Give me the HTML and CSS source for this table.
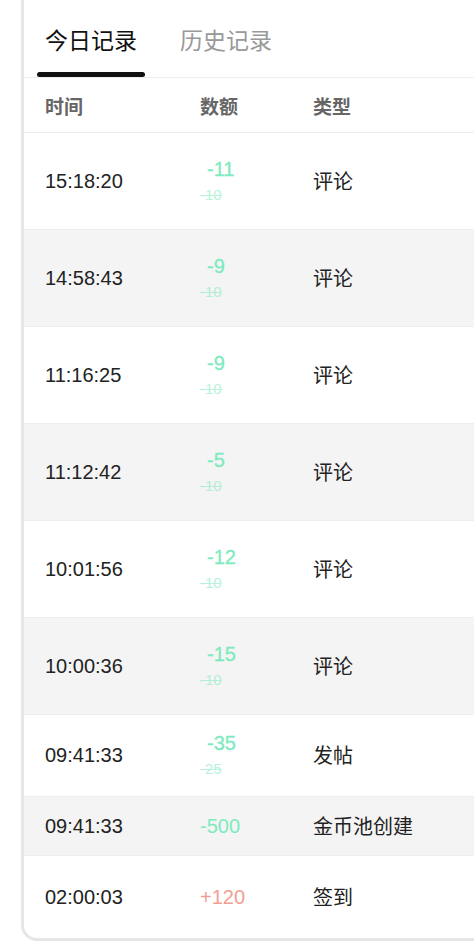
FILE: index.html
```html
<!DOCTYPE html>
<html lang="zh-CN">
<head>
  <meta charset="UTF-8" />
  <meta name="viewport" content="width=device-width, initial-scale=1" />
  <title>金币记录</title>
  <link rel="stylesheet" href="styles.css">
</head>
<body>
  <div class="card">
    <div class="tabs">
      <div class="tab active">今日记录</div>
      <div class="tab">历史记录</div>
    </div>

    <div class="row head">
      <span>时间</span>
      <span>数额</span>
      <span>类型</span>
    </div>

    <div class="row tall">
      <span class="time">15:18:20</span>
      <span class="amount stacked"><b>-11</b><s>-10</s></span>
      <span class="type">评论</span>
    </div>
    <div class="row tall alt">
      <span class="time">14:58:43</span>
      <span class="amount stacked"><b>-9</b><s>-10</s></span>
      <span class="type">评论</span>
    </div>
    <div class="row tall">
      <span class="time">11:16:25</span>
      <span class="amount stacked"><b>-9</b><s>-10</s></span>
      <span class="type">评论</span>
    </div>
    <div class="row tall alt">
      <span class="time">11:12:42</span>
      <span class="amount stacked"><b>-5</b><s>-10</s></span>
      <span class="type">评论</span>
    </div>
    <div class="row tall">
      <span class="time">10:01:56</span>
      <span class="amount stacked"><b>-12</b><s>-10</s></span>
      <span class="type">评论</span>
    </div>
    <div class="row tall alt">
      <span class="time">10:00:36</span>
      <span class="amount stacked"><b>-15</b><s>-10</s></span>
      <span class="type">评论</span>
    </div>
    <div class="row mid">
      <span class="time">09:41:33</span>
      <span class="amount stacked"><b>-35</b><s>-25</s></span>
      <span class="type">发帖</span>
    </div>
    <div class="row short alt">
      <span class="time">09:41:33</span>
      <span class="amount">-500</span>
      <span class="type">金币池创建</span>
    </div>
    <div class="row mid last">
      <span class="time">02:00:03</span>
      <span class="amount plus">+120</span>
      <span class="type">签到</span>
    </div>
  </div>
</body>
</html>
```

FILE: styles.css
```css
body {
  margin: 0;
  background: #ffffff;
  font-family: "Liberation Sans", "Noto Sans CJK SC", sans-serif;
  color: #222222;
  overflow-x: hidden;
}

.card {
  margin-left: 21px;
  border-left: 3px solid #e6e6e6;
  border-bottom: 3px solid #e6e6e6;
  border-bottom-left-radius: 16px;
  background: #ffffff;
  overflow: hidden;
}

.tabs {
  display: flex;
  gap: 27px;
  padding-left: 13px;
  height: 78px;
  border-bottom: 1px solid #eeeeee;
  box-sizing: border-box;
}

.tab {
  position: relative;
  padding: 26px 8px 0;
  font-size: 23px;
  line-height: 30px;
  color: #999999;
}

.tab.active {
  color: #111111;
}

.tab.active::after {
  content: "";
  position: absolute;
  left: 0;
  right: 0;
  bottom: 0;
  height: 5px;
  border-radius: 3px;
  background: #111111;
}

.row {
  display: grid;
  grid-template-columns: 155px 113px 1fr;
  align-items: center;
  box-sizing: border-box;
  padding-left: 21px;
  border-bottom: 1px solid #eeeeee;
  font-size: 20px;
}

.row.head {
  height: 55px;
  font-size: 19px;
  font-weight: bold;
  color: #666666;
}

.row.tall {
  height: 97px;
}

.row.mid {
  height: 82px;
}

.row.short {
  height: 59px;
}

.row.last {
  height: 82px;
  border-bottom: none;
}

.row.alt {
  background: #f4f4f4;
}

.type {
  margin-top: -2px;
}

.amount {
  color: #7eeabd;
}

.amount.plus {
  color: #f0a093;
}

.amount.stacked {
  display: flex;
  flex-direction: column;
  align-items: flex-start;
  margin-top: -1px;
}

.amount.stacked b {
  font-weight: normal;
  padding-left: 7px;
  line-height: 24px;
  -webkit-text-stroke: 0.3px #7eeabd;
}

.amount.stacked s {
  font-size: 15px;
  line-height: 20px;
  margin-top: 4px;
  opacity: 0.55;
}
```
